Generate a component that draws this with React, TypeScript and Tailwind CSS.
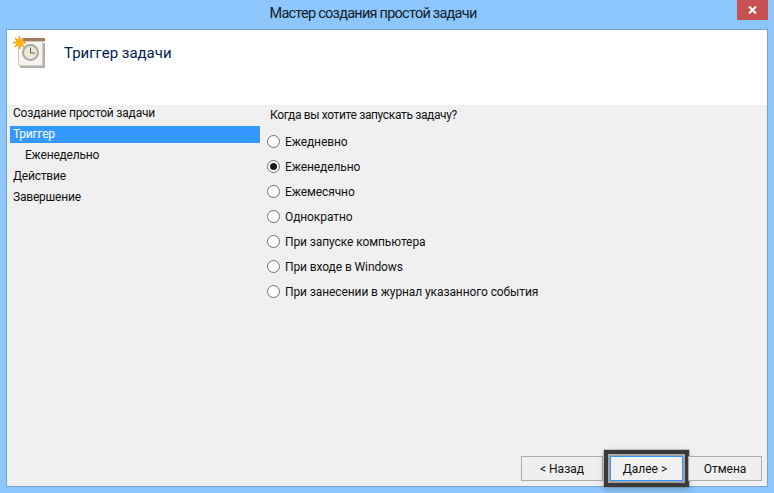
const steps = [
  { label: 'Создание простой задачи' },
  { label: 'Триггер', active: true },
  { label: 'Еженедельно', sub: true },
  { label: 'Действие' },
  { label: 'Завершение' },
]

const options = [
  'Ежедневно',
  'Еженедельно',
  'Ежемесячно',
  'Однократно',
  'При запуске компьютера',
  'При входе в Windows',
  'При занесении в журнал указанного события',
]

function TaskIcon() {
  return (
    <svg width="32" height="32" viewBox="0 0 32 32" className="shrink-0">
      <rect x="7" y="7" width="25" height="25" fill="#b0b0b0" />
      <rect x="5.5" y="5.5" width="24" height="24" fill="#f6f3ea" stroke="#d2cec2" strokeWidth="1" />
      <rect x="9" y="2" width="23" height="3" fill="#a07a60" />
      <rect x="9" y="5" width="22" height="1" fill="#d6c8b8" />
      <circle cx="17.5" cy="16.5" r="8.5" fill="#a4a9ad" />
      <circle cx="17.5" cy="16.5" r="6.5" fill="#efe9d4" />
      <path d="M17.5 11.5V17H22" fill="none" stroke="#5a5a50" strokeWidth="1" />
      <g stroke="#f29b12" strokeWidth="1.5">
        <path d="M6.5 0V13M0 6.5H13M2 2L11 11M11 2L2 11" />
      </g>
      <circle cx="6.5" cy="6.5" r="4" fill="#f9b414" />
    </svg>
  )
}

export default function App() {
  return (
    <div className="h-[493px] w-[774px] overflow-hidden bg-[#8cc6fa] font-['Roboto','Noto_Sans',sans-serif] text-[12px] text-[#111]">
      <div className="relative flex h-[29px] items-start justify-center pr-[28px] pt-[3px] text-[14.5px] leading-[22px] tracking-[-0.75px] text-[#14202c]">
        Мастер создания простой задачи
        <div className="absolute right-[6px] top-0 flex h-[20px] w-[31px] items-center justify-center bg-[#c75050]">
          <svg width="9" height="8" viewBox="0 0 9 8">
            <path d="M1 0.5L8 7.5M8 0.5L1 7.5" stroke="#fff" strokeWidth="2" />
          </svg>
        </div>
      </div>

      <div className="ml-[6px] flex h-[458px] w-[762px] flex-col border border-[#73a5d3] bg-[#f0f0f0]">
        <div className="flex h-[75px] items-start bg-white pl-[6px] pt-[6px]">
          <TaskIcon />
          <div className="ml-[19px] pt-[6px] text-[15px] leading-[22px] text-[#00224f]">Триггер задачи</div>
        </div>

        <div className="flex flex-1">
          <div className="w-[253px] pl-[3px]">
            {steps.map(step => (
              <div
                key={step.label}
                className={
                  'mb-[4px] h-[17px] leading-[17px] tracking-[-0.2px] ' +
                  (step.active ? 'bg-[#3399ff] text-white ' : '') +
                  (step.sub ? 'pl-[15px]' : 'pl-[3px]')
                }
              >
                {step.label}
              </div>
            ))}
          </div>

          <div className="flex-1 pl-[7px] pt-[2px]">
            <div className="h-[17px] pl-[3px] leading-[17px] tracking-[-0.36px]">Когда вы хотите запускать задачу?</div>
            <div className="mt-[9px] flex flex-col gap-[8px]">
              {options.map((option, i) => (
                <div key={option} className="flex h-[17px] items-center gap-[5px] tracking-[-0.1px]">
                  <div className="flex h-[13px] w-[13px] items-center justify-center rounded-full border border-[#707070] bg-white">
                    {i === 1 && <div className="h-[7px] w-[7px] rounded-full bg-[#1a1a1a]" />}
                  </div>
                  <span>{option}</span>
                </div>
              ))}
            </div>
          </div>
        </div>

        <div className="flex h-[30px] items-start pl-[514px] text-[12px]">
          <button className="h-[25px] w-[82px] border border-[#acacac] bg-[#efefef]">&lt; Назад</button>
          <button className="ml-[7px] h-[25px] w-[73px] border border-[#3399ff] bg-[#f0f0f0] pr-[3px] outline-[4px] outline-[#3a3a3a] outline-offset-[2px] shadow-[0_0_0_7px_rgba(120,120,120,0.3),0_2px_6px_6px_rgba(0,0,0,0.25)]">Далее &gt;</button>
          <button className="ml-[5px] h-[25px] w-[74px] border border-[#acacac] bg-[#efefef]">Отмена</button>
        </div>
      </div>
    </div>
  )
}
